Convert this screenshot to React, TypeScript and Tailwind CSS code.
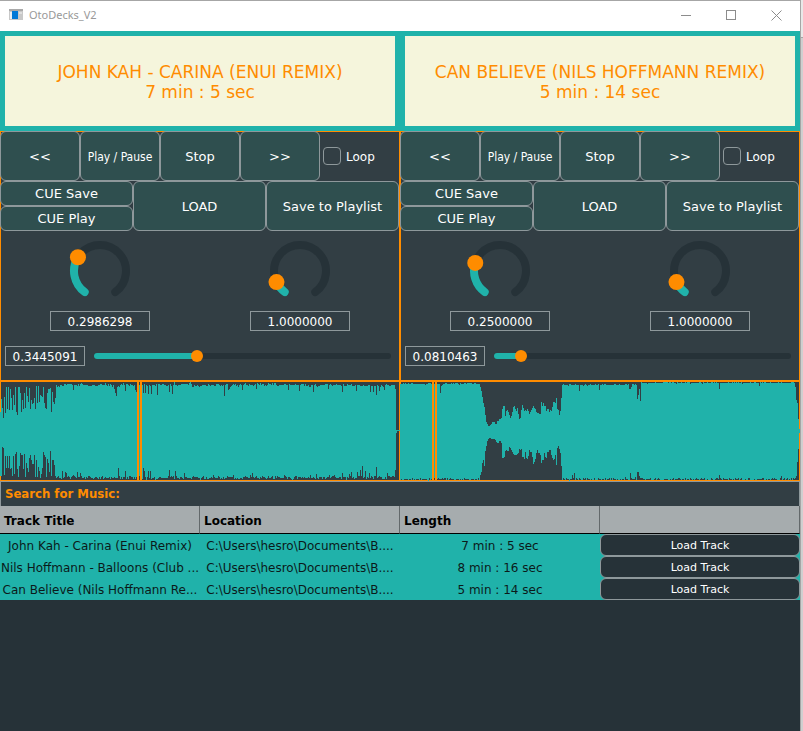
import { useState } from "react";

type Deck = {
  id: string;
  title: string;
  length: string;
  volume: number;
  speed: number;
  position: number;
  wave: string;
};

const WAVE_W = 400;

/** Small repeatable noise in the range 0..1. */
function noise(n: number): number {
  const v = Math.sin(n * 127.1 + 11.7) * 43758.5453;
  return v - Math.floor(v);
}

function buildPath(top: number[], bottom: number[]): string {
  let d = `M0 ${top[0].toFixed(1)}`;
  top.forEach((y, x) => {
    d += `V${y.toFixed(1)}H${x + 1}`;
  });
  for (let x = bottom.length - 1; x >= 0; x--) {
    d += `V${bottom[x].toFixed(1)}H${x}`;
  }
  return d + "Z";
}

function sample(points: number[][], x: number): number {
  for (let i = 1; i < points.length; i++) {
    if (x <= points[i][0]) {
      const [x0, y0] = points[i - 1];
      const [x1, y1] = points[i];
      return y0 + ((y1 - y0) * (x - x0)) / (x1 - x0);
    }
  }
  return points[points.length - 1][1];
}

const INTRO_TOP = [
  31, 18, 27, 37, 16, 32, 6, 28, 6, 29, 8, 17, 29, 14, 24, 6, 31, 34, 6, 6, 12, 31, 19, 28, 12, 27, 6, 15, 21,
  7, 28, 19, 23, 22, 17, 28, 5, 22, 5, 21, 14, 15, 16, 6, 22, 27, 28, 12, 8, 8, 7, 31, 11, 21, 23, 17,
];
const INTRO_BOTTOM = [
  95, 95, 66, 67, 94, 75, 87, 75, 87, 75, 88, 87, 95, 75, 93, 73, 71, 88, 96, 85, 72, 74, 74, 88, 73, 96, 82, 87,
  91, 77, 74, 79, 83, 83, 74, 96, 79, 96, 86, 90, 97, 93, 87, 71, 74, 76, 96, 78, 82, 91, 70, 95, 79, 79, 84, 95,
];

function carinaWave(): string {
  const top: number[] = [];
  const bottom: number[] = [];
  const topDips: Record<number, number> = {
    73: 9, 104: 4, 105: 2, 114: 8, 115: 12, 116: 15, 125: 10, 135: 9, 136: 11, 143: 12, 145: 12, 148: 13, 151: 13,
    157: 14, 169: 11, 172: 13, 174: 1, 185: 3, 190: 1, 224: 15, 228: 9, 229: 8, 242: 9, 256: 8, 288: 9, 299: 10,
    313: 11, 328: 8, 342: 11, 356: 10, 370: 11, 373: 11, 376: 14, 379: 10, 384: 9, 395: 8,
  };
  const bottomDips: Record<number, number> = {
    62: 90, 65: 91, 66: 92, 77: 91, 80: 92, 118: 87, 125: 90, 143: 87, 144: 90, 148: 90, 150: 90, 169: 89, 175: 90,
    184: 92, 213: 94, 252: 92, 284: 94, 316: 93, 342: 92, 349: 93, 351: 91, 357: 91, 360: 89, 362: 85, 365: 90,
    369: 92, 376: 86, 387: 92, 395: 89,
  };
  for (let x = 0; x < WAVE_W; x++) {
    if (x < INTRO_TOP.length) {
      top.push(INTRO_TOP[x]);
      bottom.push(INTRO_BOTTOM[x]);
    } else if (x < 396) {
      const rise = noise(Math.floor(x / 4)) * 2;
      top.push(topDips[x] ?? 2 + rise + noise(x) * 2);
      bottom.push(bottomDips[x] ?? 99 - noise(Math.floor(x / 3) + 90) * 2 - noise(x + 500) * 3);
    } else {
      top.push(49);
      bottom.push(x === 396 ? 52 : 50);
    }
  }
  return buildPath(top, bottom);
}

const BREAK_TOP = [
  [80, 4], [81.5, 9], [83, 19], [85, 29], [86, 39], [88, 44], [90, 45], [92, 42], [94, 40], [96, 45], [97, 41],
  [100, 38], [101.5, 37], [102, 26], [104.5, 27], [105.5, 35], [107, 29], [109, 34], [110.5, 39], [112, 31],
  [114, 27], [117.5, 28], [119, 36], [121, 37], [122, 24], [124, 27], [125.5, 31], [127, 27], [129, 33], [131, 30],
  [134, 25], [136, 28], [138, 33], [140, 35], [141.5, 23], [145, 24], [147, 29], [150, 28], [152, 30], [154, 19],
  [155.5, 23], [156.5, 18], [158, 30], [159, 33], [161, 29], [162, 4],
];
const BREAK_BOTTOM = [
  [80, 96], [81.5, 91], [83, 77], [84.5, 85], [85.5, 70], [87.5, 60], [89.5, 57], [91.5, 58], [95, 58], [98, 63],
  [100, 59], [101.5, 62], [102.5, 77], [104.5, 75], [106, 70], [109, 69], [110.5, 65], [112, 72], [116.5, 75],
  [118, 73], [119.5, 67], [121.5, 67], [122.5, 77], [124, 78], [126, 72], [127.5, 80], [129, 71], [130, 67],
  [131.5, 72], [134, 83], [136, 75], [137.5, 70], [140, 73], [142, 83], [145, 72], [146, 76], [148, 72],
  [149.5, 68], [151.5, 73], [153.5, 77], [155.5, 75], [156.5, 85], [157.5, 68], [159, 67], [161, 73], [162, 97],
];

function believeWave(): string {
  const top: number[] = [];
  const bottom: number[] = [];
  const topDips: Record<number, number> = {
    40: 12, 41: 5, 179: 10, 187: 5, 199: 9, 229: 8, 230: 8, 231: 6, 237: 18, 238: 14, 239: 8, 240: 20, 319: 8,
    359: 5, 395: 6, 396: 19, 397: 22, 398: 38, 399: 48,
  };
  const bottomDips: Record<number, number> = {
    172: 94, 174: 92, 225: 96, 230: 92, 235: 96, 237: 91, 238: 91, 239: 95, 319: 94, 381: 95, 395: 97, 396: 95,
    397: 81, 398: 68, 399: 52,
  };
  for (let x = 0; x < WAVE_W; x++) {
    if (x >= 80 && x < 162) {
      const jitter = x > 101 && x < 160 ? 5 : 1;
      top.push(sample(BREAK_TOP, x + 0.5) + (noise(x + 31) - 0.5) * jitter);
      bottom.push(sample(BREAK_BOTTOM, x + 0.5) + (noise(x + 47) - 0.5) * jitter);
    } else {
      const base = x > 240 ? 1 : x > 160 ? 3 : 2;
      top.push(topDips[x] ?? base + noise(x + 70) * 1.5);
      bottom.push(bottomDips[x] ?? 99.5 - noise(x + 900) * 2.5);
    }
  }
  return buildPath(top, bottom);
}

const DECKS: Deck[] = [
  {
    id: "left",
    title: "JOHN KAH - CARINA (ENUI REMIX)",
    length: "7 min : 5 sec",
    volume: 0.2986298,
    speed: 1,
    position: 0.3445091,
    wave: carinaWave(),
  },
  {
    id: "right",
    title: "CAN BELIEVE (NILS HOFFMANN REMIX)",
    length: "5 min : 14 sec",
    volume: 0.25,
    speed: 1,
    position: 0.0810463,
    wave: believeWave(),
  },
];

const TRACKS = [
  { title: "John Kah - Carina (Enui Remix)", location: "C:\\Users\\hesro\\Documents\\B....", length: "7 min : 5 sec" },
  { title: "Nils Hoffmann - Balloons (Club ...", location: "C:\\Users\\hesro\\Documents\\B....", length: "8 min : 16 sec" },
  { title: "Can Believe (Nils Hoffmann Re...", location: "C:\\Users\\hesro\\Documents\\B....", length: "5 min : 14 sec" },
];

const BUTTON =
  "flex min-w-0 items-center justify-center rounded-md border border-[#8e989b] bg-[#2f4f4f] whitespace-nowrap text-white";
const TALL_BUTTON = `${BUTTON} pt-0.5`;

function TitleBar() {
  return (
    <header className="flex h-[31px] items-center border-t border-[#a6a6a6] bg-white pr-[18px] pb-0.5 pl-[9px]">
      <svg width="14" height="12" viewBox="0 0 14 12" aria-hidden="true">
        <rect width="14" height="11" fill="#c8c8c8" />
        <rect width="14" height="2" fill="#a9a9a9" />
        <rect x="1" y="3" width="2" height="7" fill="#e9eef2" />
        <rect x="3" y="2" width="6" height="8" fill="#0078d7" />
        <rect x="10" y="3" width="3" height="2" fill="#dedede" />
      </svg>
      <h1 className="ml-[6px] flex-1 font-['Noto_Sans','Open_Sans',sans-serif] text-[11px] text-[#999999]">OtoDecks_V2</h1>
      <div className="flex gap-[34px] text-[#8c8c8c]">
        <button type="button" aria-label="Minimize">
          <svg width="11" height="11" viewBox="0 0 11 11" fill="none" stroke="currentColor">
            <path d="M0 5.5H10" />
          </svg>
        </button>
        <button type="button" aria-label="Maximize">
          <svg width="11" height="11" viewBox="0 0 11 11" fill="none" stroke="currentColor">
            <rect x="0.5" y="0.5" width="9" height="9" />
          </svg>
        </button>
        <button type="button" aria-label="Close">
          <svg width="11" height="11" viewBox="0 0 11 11" fill="none" stroke="currentColor">
            <path d="M0.5 0.5L10.5 10.5M10.5 0.5L0.5 10.5" />
          </svg>
        </button>
      </div>
    </header>
  );
}

function polar(fraction: number): [number, number] {
  const angle = ((216 + fraction * 288) * Math.PI) / 180;
  return [50 + 26 * Math.sin(angle), 40 - 26 * Math.cos(angle)];
}

function arc(from: number, to: number): string {
  const [x0, y0] = polar(from);
  const [x1, y1] = polar(to);
  return `M${x0} ${y0}A26 26 0 ${(to - from) * 288 > 180 ? 1 : 0} 1 ${x1} ${y1}`;
}

function Knob({ label, initial, max }: { label: string; initial: number; max: number }) {
  const [value, setValue] = useState(initial);
  const fraction = value / max;
  const [cx, cy] = polar(fraction);
  return (
    <div className="flex flex-col items-center">
      <div className="relative h-20 w-[100px]">
        <svg className="h-20 w-[100px]" viewBox="0 0 100 80" fill="none" strokeLinecap="round" strokeWidth="8" aria-hidden="true">
          <path d={arc(0, 1)} stroke="#263238" />
          <path d={arc(0, fraction)} stroke="#20b2aa" />
          <circle cx={cx} cy={cy} r="8" fill="#ff8c00" />
        </svg>
        <input
          type="range"
          aria-label={label}
          min={0}
          max={max}
          step="any"
          value={value}
          onChange={(e) => setValue(Number(e.target.value))}
          className="absolute inset-0 h-full w-full cursor-pointer opacity-0"
        />
      </div>
      <input
        type="text"
        readOnly
        aria-label={`${label} value`}
        value={value.toFixed(7)}
        className="h-5 w-[100px] border border-[#8e989b] bg-transparent pt-0.5 text-center text-xs text-white"
      />
    </div>
  );
}

function PositionSlider({ value, onChange }: { value: number; onChange: (v: number) => void }) {
  return (
    <div className="flex h-5 items-center gap-[6px] pr-[6px] pl-[5px]">
      <input
        type="text"
        readOnly
        aria-label="Position value"
        value={value.toFixed(7)}
        className="h-5 w-20 border border-[#8e989b] bg-transparent pt-0.5 text-center text-xs text-white"
      />
      <div className="relative flex h-5 flex-1 items-center px-[3px]">
        <div className="h-[6px] w-full overflow-hidden rounded-full bg-[#263238]">
          <div className="h-full bg-[#20b2aa]" style={{ width: `${value * 100}%` }} />
        </div>
        <input
          type="range"
          aria-label="Position"
          min={0}
          max={1}
          step="any"
          value={value}
          onChange={(e) => onChange(Number(e.target.value))}
          className="absolute inset-0 h-5 w-full appearance-none bg-transparent [&::-webkit-slider-thumb]:h-3 [&::-webkit-slider-thumb]:w-3 [&::-webkit-slider-thumb]:appearance-none [&::-webkit-slider-thumb]:rounded-full [&::-webkit-slider-thumb]:bg-[#ff8c00]"
        />
      </div>
    </div>
  );
}

function DeckPanel({ deck }: { deck: Deck }) {
  const [position, setPosition] = useState(deck.position);
  const playhead = Math.floor(position * WAVE_W);
  return (
    <section aria-label={deck.title} className="min-w-0">
      <div className="flex h-[100px] flex-col items-center justify-center border-[5px] border-[#20b2aa] bg-[#f5f5dc] pt-0.5 text-[17px]/5 text-[#ff8c00]">
        <h2>{deck.title}</h2>
        <p>{deck.length}</p>
      </div>

      <div className="pb-[15px] text-[13px] ring-1 ring-[#ff8c00] ring-inset">
        <div className="grid h-[50px] grid-cols-5">
          <button type="button" className={TALL_BUTTON}>&lt;&lt;</button>
          <button type="button" className={`${TALL_BUTTON} font-['DejaVu_Sans_Condensed','DejaVu_Sans',sans-serif] text-xs`}>
            Play / Pause
          </button>
          <button type="button" className={TALL_BUTTON}>Stop</button>
          <button type="button" className={TALL_BUTTON}>&gt;&gt;</button>
          <label className="flex items-center gap-[5px] pl-[3px] text-xs text-white">
            <input
              type="checkbox"
              className="h-[18px] w-[18px] appearance-none rounded border border-[#8e989b] checked:bg-[#20b2aa]"
            />
            <span className="pt-0.5">Loop</span>
          </label>
        </div>
        <div className="grid h-[50px] grid-cols-3 pr-px">
          <div className="grid grid-rows-2">
            <button type="button" className={BUTTON}>CUE Save</button>
            <button type="button" className={BUTTON}>CUE Play</button>
          </div>
          <button type="button" className={TALL_BUTTON}>LOAD</button>
          <button type="button" className={TALL_BUTTON}>Save to Playlist</button>
        </div>
        <div className="mb-[15px] grid grid-cols-2">
          <Knob label="Volume" initial={deck.volume} max={1} />
          <Knob label="Speed" initial={deck.speed} max={10} />
        </div>
        <PositionSlider value={position} onChange={setPosition} />
      </div>

      <div className="h-[100px] ring-1 ring-[#ff8c00] ring-inset">
        <svg
          className="block h-full w-full"
          viewBox="0 0 400 100"
          preserveAspectRatio="none"
          shapeRendering="crispEdges"
          role="img"
          aria-label="Waveform"
        >
          <path d={deck.wave} fill="#20b2aa" />
          <path d={`M${playhead + 1} 0V100M${playhead + 4} 0V100`} stroke="#ff8c00" strokeWidth="2" />
        </svg>
      </div>
    </section>
  );
}

function Playlist() {
  return (
    <section aria-label="Playlist" className="flex flex-1 flex-col">
      <div className="flex h-[25px] items-center border-x border-t border-[#8e989b] bg-[#323e44] pl-1">
        <label
          htmlFor="search"
          className="font-['DejaVu_Sans_Condensed','DejaVu_Sans',sans-serif] text-[13px] font-bold text-[#ff8c00]"
        >
          Search for Music:
        </label>
        <input id="search" type="text" className="h-full min-w-0 flex-1 bg-transparent px-2 text-xs text-white outline-none" />
      </div>
      <table className="w-full table-fixed border-separate border-spacing-0 text-xs text-[#0b1a1a]">
        <thead>
          <tr className="h-7 bg-[#a6acae] text-left text-black">
            {["Track Title", "Location", "Length", ""].map((name) => (
              <th key={name} className="border-r border-b border-r-[#63696b] border-b-black p-0 pt-0.5 pl-1 font-bold">
                {name}
              </th>
            ))}
          </tr>
        </thead>
        <tbody>
          {TRACKS.map((track) => (
            <tr key={track.title} className="h-[22px] bg-[#20b2aa] text-center whitespace-nowrap">
              <td className="p-0 pt-0.5">{track.title}</td>
              <td className="p-0 pt-0.5">{track.location}</td>
              <td className="p-0 pt-0.5">{track.length}</td>
              <td className="p-0">
                <button
                  type="button"
                  className="block h-[22px] w-full rounded-md border border-[#8e989b] bg-[#263238] pt-0.5 text-[11px] text-white"
                >
                  Load Track
                </button>
              </td>
            </tr>
          ))}
        </tbody>
      </table>
    </section>
  );
}

export default function App() {
  return (
    <div className="flex min-h-screen bg-[#cfcfcf] font-['DejaVu_Sans',Verdana,sans-serif]">
      <div className="flex min-w-0 flex-1 flex-col bg-[#263238]">
        <TitleBar />
        <main className="flex flex-1 flex-col">
          <div className="grid grid-cols-2 bg-[#323e44]">
            {DECKS.map((deck) => (
              <DeckPanel key={deck.id} deck={deck} />
            ))}
          </div>
          <Playlist />
        </main>
      </div>
      <div className="flex w-[3px] flex-col border-l border-[#a6a6a6]">
        <div className="h-[38px] border-b border-[#a6a6a6] bg-[#e8e8e8]" />
      </div>
    </div>
  );
}
